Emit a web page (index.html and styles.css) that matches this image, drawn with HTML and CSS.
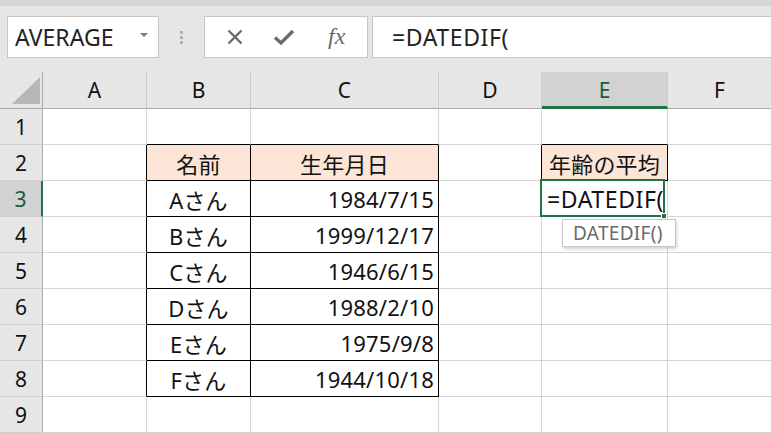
FILE: index.html
```html
<!DOCTYPE html>
<html lang="ja">
<head>
<meta charset="utf-8">
<title>Excel</title>
<link rel="stylesheet" href="styles.css">
</head>
<body>
<div class="toolbar">
  <div class="namebox"><span class="nb-text">AVERAGE</span><span class="caret"></span></div>
  <div class="grip"><i></i><i></i><i></i></div>
  <div class="fbtns">
    <svg class="ico" width="20" height="20" viewBox="0 0 20 20"><path d="M3.5 3.5 L16.5 16.5 M16.5 3.5 L3.5 16.5" stroke="#6b6b6b" stroke-width="2.4" fill="none"/></svg>
    <svg class="ico" width="22" height="20" viewBox="0 0 22 20"><path d="M2 10.5 L8 16 L20 4" stroke="#6b6b6b" stroke-width="3.4" fill="none" stroke-linejoin="miter"/></svg>
    <span class="fx">fx</span>
  </div>
  <div class="fbar">=DATEDIF(</div>
</div>
<div class="sheet">
  <div class="corner"><svg width="43" height="36" viewBox="0 0 43 36"><polygon points="12,32 40,32 40,5" fill="#b7b7b7"/></svg></div>
  <div class="ch">A</div><div class="ch">B</div><div class="ch">C</div><div class="ch">D</div><div class="ch sel">E</div><div class="ch">F</div>

  <div class="rh">1</div><div class="c"></div><div class="c bb"></div><div class="c bb"></div><div class="c"></div><div class="c bb"></div><div class="c"></div>

  <div class="rh">2</div><div class="c br"></div><div class="c hd br bb ctr">名前</div><div class="c hd br bb ctr">生年月日</div><div class="c br"></div><div class="c hd br bb ctr">年齢の平均</div><div class="c"></div>

  <div class="rh rsel">3</div><div class="c br"></div><div class="c br bb ctr">Aさん</div><div class="c br bb rt">1984/7/15</div><div class="c"></div><div class="c edit">=DATEDIF(</div><div class="c"></div>

  <div class="rh">4</div><div class="c br"></div><div class="c br bb ctr">Bさん</div><div class="c br bb rt">1999/12/17</div><div class="c"></div><div class="c"></div><div class="c"></div>

  <div class="rh">5</div><div class="c br"></div><div class="c br bb ctr">Cさん</div><div class="c br bb rt">1946/6/15</div><div class="c"></div><div class="c"></div><div class="c"></div>

  <div class="rh">6</div><div class="c br"></div><div class="c br bb ctr">Dさん</div><div class="c br bb rt">1988/2/10</div><div class="c"></div><div class="c"></div><div class="c"></div>

  <div class="rh">7</div><div class="c br"></div><div class="c br bb ctr">Eさん</div><div class="c br bb rt">1975/9/8</div><div class="c"></div><div class="c"></div><div class="c"></div>

  <div class="rh">8</div><div class="c br"></div><div class="c br bb ctr">Fさん</div><div class="c br bb rt">1944/10/18</div><div class="c"></div><div class="c"></div><div class="c"></div>

  <div class="rh">9</div><div class="c"></div><div class="c"></div><div class="c"></div><div class="c"></div><div class="c"></div><div class="c"></div>

  <div class="active"><span class="handle"></span></div>
  <div class="tip">DATEDIF()</div>
</div>
</body>
</html>
```
FILE: styles.css
```css
* { box-sizing: border-box; }
html, body { margin: 0; padding: 0; }
body {
  width: 771px;
  height: 433px;
  overflow: hidden;
  background: #e6e6e6;
  font-family: "Noto Sans", "Noto Sans CJK JP", sans-serif;
  color: #111;
}

.toolbar {
  height: 72px;
  display: flex;
  align-items: flex-start;
  padding: 16px 0 0 7px;
  background: linear-gradient(#d6d6d6 0, #d6d6d6 6px, #e6e6e6 6px);
}
.namebox {
  width: 152px;
  height: 42px;
  background: #fff;
  border: 1px solid #c6c6c6;
  display: flex;
  align-items: center;
  justify-content: space-between;
  padding: 0 10px 0 7px;
}
.nb-text { font-size: 23px; color: #222; }
.caret {
  width: 0; height: 0;
  border-left: 4px solid transparent;
  border-right: 4px solid transparent;
  border-top: 4px solid #7a7a7a;
  margin-top: -4px;
}
.grip {
  width: 45px;
  height: 42px;
  display: flex;
  flex-direction: column;
  align-items: center;
  justify-content: center;
  gap: 2px;
}
.grip i { display: block; width: 3px; height: 3px; background: #b2b2b2; }
.fbtns {
  width: 164px;
  height: 42px;
  background: #fff;
  border: 1px solid #c6c6c6;
  display: flex;
  align-items: center;
  padding-left: 20px;
  gap: 28px;
  margin-right: 4px;
}
.fx {
  font-family: "Liberation Serif", serif;
  font-style: italic;
  font-size: 24px;
  color: #6b6b6b;
  margin-left: 5px;
  margin-top: -2px;
}
.fbar {
  flex: 1;
  height: 42px;
  background: #fff;
  border: 1px solid #c6c6c6;
  border-right: none;
  display: flex;
  align-items: center;
  padding-left: 19px;
  font-size: 23px;
  letter-spacing: 0.6px;
  color: #222;
}

.sheet {
  position: relative;
  display: grid;
  grid-template-columns: 43px 104px 104px 188px 103px 126px 104px;
  grid-template-rows: 37px repeat(9, 36px);
  background: #fff;
}
.corner {
  background: #e6e6e6;
  border-right: 1px solid #ababab;
  border-bottom: 1px solid #ababab;
}
.corner svg { display: block; }
.ch {
  background: #e6e6e6;
  border-right: 1px solid #cdcdcd;
  border-bottom: 1px solid #ababab;
  display: flex;
  align-items: center;
  justify-content: center;
  font-size: 21px;
  color: #111;
}
.ch.sel {
  background: #d2d2d2;
  color: #1a5c38;
  border-bottom: 3px solid #217346;
  padding-top: 2px;
}
.rh {
  background: #e6e6e6;
  border-right: 1px solid #ababab;
  border-bottom: 1px solid #cdcdcd;
  display: flex;
  align-items: center;
  justify-content: center;
  font-size: 21px;
  color: #111;
}
.rh.rsel {
  background: #d2d2d2;
  color: #1a5c38;
  border-right: 2px solid #217346;
}
.c {
  border-right: 1px solid #d4d4d4;
  border-bottom: 1px solid #d4d4d4;
  display: flex;
  align-items: center;
  font-size: 22px;
  letter-spacing: 0.2px;
  white-space: nowrap;
  color: #111;
}
.c.br { border-right-color: #000; }
.c.bb { border-bottom-color: #000; }
.c.hd { background: #fce4d6; }
.c.ctr { justify-content: center; }
.c.rt { justify-content: flex-end; padding-right: 4px; }
.c.edit { padding-left: 5px; font-size: 23px; letter-spacing: 0.6px; overflow: visible; }

.active {
  position: absolute;
  left: 540px;
  top: 107px;
  width: 125px;
  height: 38px;
  border: 2px solid #217346;
}
.handle {
  position: absolute;
  right: -4px;
  bottom: -4px;
  width: 6px;
  height: 6px;
  background: #217346;
  border: 1px solid #fff;
}
.tip {
  position: absolute;
  left: 562px;
  top: 147px;
  width: 114px;
  height: 28px;
  background: #fff;
  border: 1px solid #c8c8c8;
  box-shadow: 1px 2px 3px rgba(0,0,0,0.18);
  font-size: 19px;
  letter-spacing: 0.3px;
  color: #6a6a6a;
  padding-left: 10px;
  display: flex;
  align-items: center;
}
```
